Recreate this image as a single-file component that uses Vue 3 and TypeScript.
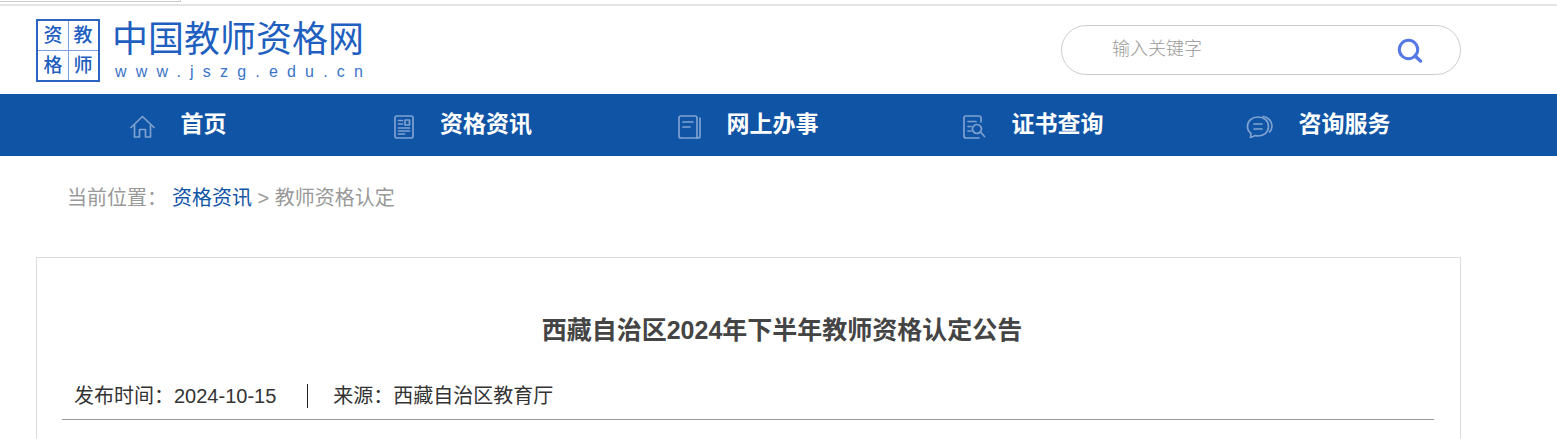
<template>
  <div class="page">
    <div class="top-strip"><div class="top-tab"></div></div>

    <header class="header">
      <a class="logo" href="#">
        <div class="logo-box">
          <span>资</span><span>教</span><span>格</span><span>师</span>
        </div>
        <div class="logo-text">
          <div class="logo-name">中国教师资格网</div>
          <div class="logo-url">www.jszg.edu.cn</div>
        </div>
      </a>
      <div class="search">
        <input class="search-input" type="text" placeholder="输入关键字" />
        <svg class="search-icon" width="26" height="26" viewBox="0 0 26 26" fill="none">
          <circle cx="11.5" cy="11.5" r="9.2" stroke="#5478e4" stroke-width="3" />
          <path d="M18 18l5.5 5" stroke="#5478e4" stroke-width="3.4" stroke-linecap="round" />
        </svg>
      </div>
    </header>

    <nav class="nav">
      <a v-for="item in navItems" :key="item.label" class="nav-item" href="#">
        <svg
          class="nav-icon"
          :width="item.w"
          height="26"
          :viewBox="`0 0 ${item.w} 26`"
          fill="none"
          stroke="#7fa2d2"
          stroke-width="1.7"
          stroke-linecap="round"
          stroke-linejoin="round"
        >
          <path v-for="d in item.paths" :key="d" :d="d" />
        </svg>
        <span class="nav-label">{{ item.label }}</span>
      </a>
    </nav>

    <div class="crumb">
      <span class="crumb-label">当前位置：</span>
      <a class="crumb-link" href="#">资格资讯</a>
      <span> &gt; 教师资格认定</span>
    </div>

    <section class="card">
      <h1 class="title">西藏自治区2024年下半年教师资格认定公告</h1>
      <div class="meta">
        <span class="meta-time">发布时间：2024-10-15</span>
        <span class="meta-sep"></span>
        <span>来源：西藏自治区教育厅</span>
      </div>
    </section>
  </div>
</template>

<script setup lang="ts">
interface NavItem {
  label: string;
  w: number;
  paths: string[];
}

const navItems: NavItem[] = [
  {
    label: '首页',
    w: 25,
    paths: ['M1 14.5L12.5 3.5L24 14.5', 'M4.5 12V24H9.5V16.5H15.5V24H20.5V12'],
  },
  {
    label: '资格资讯',
    w: 20,
    paths: [
      'M3 3H17Q19 3 19 5V23Q19 25 17 25H3Q1 25 1 23V5Q1 3 3 3Z',
      'M4.5 7.5H8.5M4.5 11H8.5',
      'M11 7H15.5V12H11Z',
      'M4.5 15H15.5M4.5 18H15.5M4.5 21H10.5',
    ],
  },
  {
    label: '网上办事',
    w: 23,
    paths: [
      'M3 3H17Q19 3 19 5V25H3Q1 25 1 23V5Q1 3 3 3Z',
      'M5 9H15M5 14H12',
      'M22 5V23Q22 25 20 25H19',
    ],
  },
  {
    label: '证书查询',
    w: 23,
    paths: [
      'M16 25H3Q1 25 1 23V5Q1 3 3 3H16Q18 3 18 5V9',
      'M5 8.5H13M5 13.5H8M5 18H8',
      'M14 11.5A4.5 4.5 0 1 1 13.9 11.5Z',
      'M17.5 19L21.5 23.5',
    ],
  },
  {
    label: '咨询服务',
    w: 27,
    paths: [
      'M12 4C6 4 1.5 8 1.5 13.5C1.5 16.5 3 19 5 20.5L4.5 24.5L9.5 22.5C10.5 22.8 11 23 12 23C18 23 22.5 19 22.5 13.5C22.5 8 18 4 12 4Z',
      'M8 11H16M8 16H16',
      'M17 3.5C22 4 26 8 26 13C26 15.5 25 17.5 23.5 19',
    ],
  },
];
</script>

<style>
html,
body {
  margin: 0;
  height: 100%;
  overflow: hidden;
  background: #fff;
}
</style>

<style scoped>
.page {
  height: 439px;
  overflow: hidden;
  font-family: "Liberation Sans", "Noto Sans CJK SC", sans-serif;
  color: #333;
}

a {
  text-decoration: none;
}

.top-strip {
  height: 4px;
  border-bottom: 2px solid #e4e4e4;
}

.top-tab {
  width: 180px;
  height: 1px;
  border-right: 1px solid #ccc;
  border-bottom: 1px solid #ccc;
}

.header {
  height: 88px;
  padding: 0 96px 0 36px;
  display: flex;
  justify-content: space-between;
  align-items: flex-start;
}

.logo {
  display: flex;
  gap: 12px;
  padding-top: 13px;
  color: #1f5fc0;
}

.logo-box {
  width: 60px;
  height: 59px;
  border: 2px solid #2b63c0;
  display: grid;
  grid-template-columns: 1fr 1fr;
  grid-template-rows: 1fr 1fr;
  font-size: 19px;
  font-weight: 500;
  line-height: 29px;
  text-align: center;
  background: linear-gradient(#7fa0dc, #7fa0dc) center / 100% 1px no-repeat,
    linear-gradient(#7fa0dc, #7fa0dc) center / 1px 100% no-repeat;
}

.logo-name {
  font-size: 36px;
  line-height: 42px;
  width: 260px;
  font-weight: 400;
}

.logo-url {
  margin-top: 2px;
  padding-left: 3px;
  font-size: 16px;
  line-height: 18px;
  letter-spacing: 9.2px;
  white-space: nowrap;
  color: #3a74c8;
}

.search {
  width: 400px;
  height: 50px;
  margin-top: 19px;
  box-sizing: border-box;
  border: 1px solid #ccc;
  border-radius: 25px;
  padding: 0 37px 0 50px;
  display: flex;
  align-items: center;
  justify-content: space-between;
}

.search-input {
  border: 0;
  outline: 0;
  padding: 0;
  width: 200px;
  font: 18px "Liberation Sans", "Noto Sans CJK SC", sans-serif;
  font-weight: 300;
  margin-top: -2px;
}

.search-input::placeholder {
  color: #999;
  opacity: 1;
}

.search-icon {
  flex: none;
  margin-top: 2px;
}

.nav {
  height: 62px;
  margin: 0 96px 0 0;
  padding-left: 35px;
  display: flex;
  background: #1054a5;
  box-shadow: 96px 0 0 #1054a5;
}

.nav-item {
  width: 285px;
  display: flex;
  align-items: center;
  justify-content: center;
  gap: 26px;
  color: #fff;
  font-size: 23px;
  font-weight: 700;
}

.nav-label {
  margin-top: -6px;
}

.nav-icon {
  flex: none;
  margin-top: 1px;
  margin-left: 1px;
}

.crumb {
  padding: 27px 0 0 67px;
  height: 74px;
  box-sizing: border-box;
  font-size: 20px;
  line-height: 30px;
  color: #999;
  white-space: pre-wrap;
}

.crumb-label {
  margin-right: 5px;
}

.crumb-link {
  color: #1054a5;
}

.card {
  margin: 27px 96px 0 36px;
  height: 300px;
  box-sizing: border-box;
  border: 1px solid #ddd;
  padding: 0 26px 0 25px;
}

.title {
  margin: 56px 0 0;
  padding-left: 68px;
  font-size: 25px;
  line-height: 32px;
  font-weight: 700;
  text-align: center;
  color: #444;
}

.meta {
  margin-top: 35px;
  padding: 0 0 8px 12px;
  border-bottom: 1px solid #999;
  display: flex;
  align-items: center;
  font-size: 20px;
  line-height: 30px;
  color: #333;
}

.meta-sep {
  width: 1px;
  height: 24px;
  margin: 0 25px 0 31px;
  background: #222;
}
</style>
